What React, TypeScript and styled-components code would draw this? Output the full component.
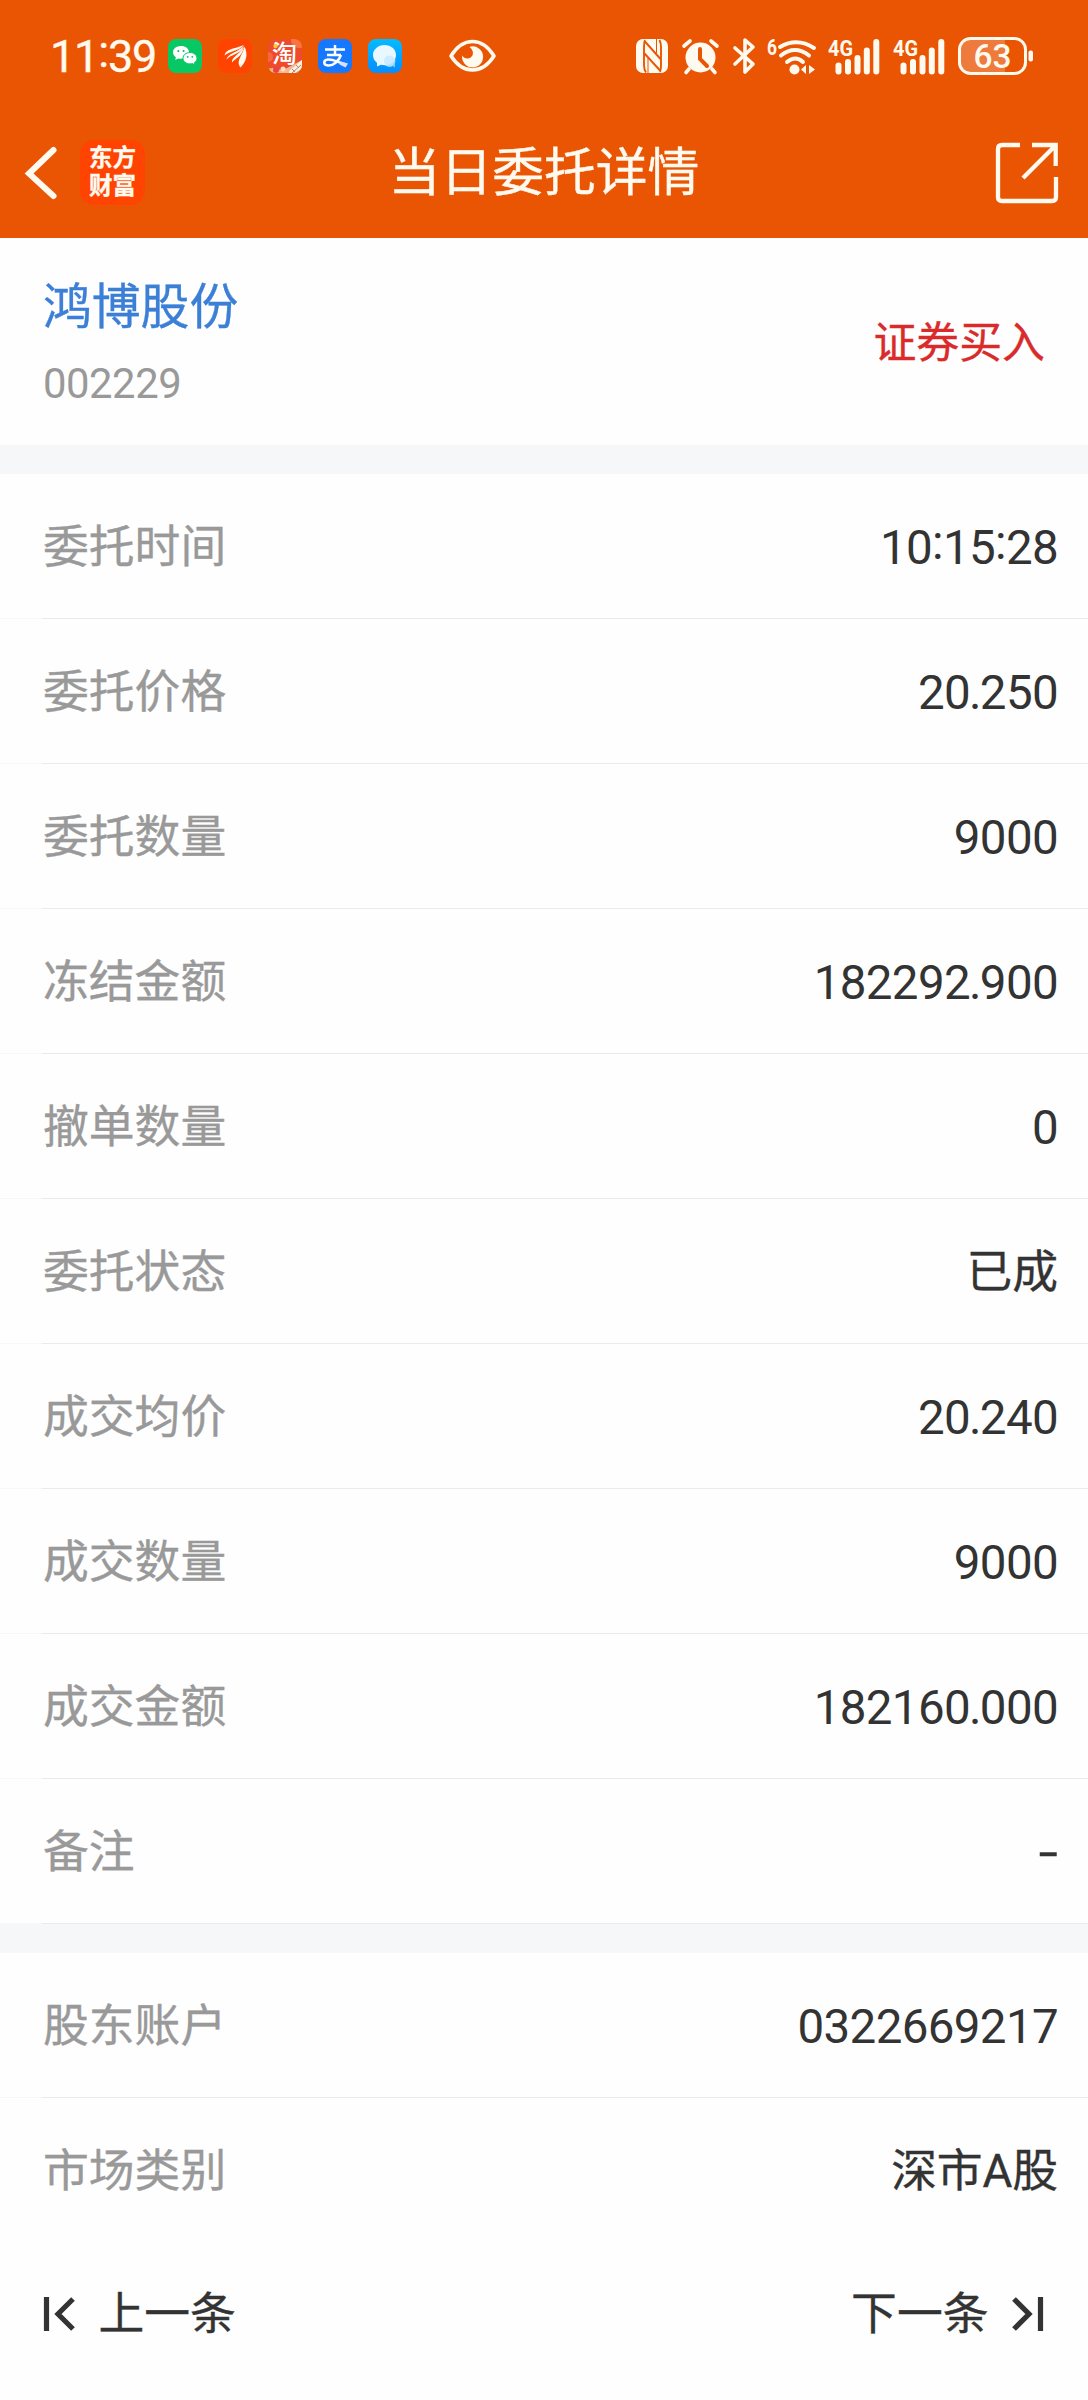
import React from 'react';
import styled, { createGlobalStyle } from 'styled-components';

const Global = createGlobalStyle`
  * { box-sizing: border-box; }
  body { margin: 0; background: #fefefe; font-family: Roboto, "Noto Sans CJK SC", sans-serif; }
  svg { display: block; flex: none; overflow: visible; }
`;

const Screen = styled.main`
  width: 1088px;
  height: 2400px;
  display: flex;
  flex-direction: column;
  background: #fefefe;
  color: #333;
  overflow: hidden;
  -webkit-text-stroke: 0.35px currentColor;
`;

const Header = styled.header`
  height: 238px;
  background: #ea5504;
  color: #fffaf0;
`;

const StatusBar = styled.div`
  height: 112px;
  padding: 0 54px 0 50px;
  display: flex;
  align-items: center;
`;

const Clock = styled.time`
  width: 108px;
  margin-right: 10px;
  padding-top: 2px;
  font-size: 45px;
  line-height: 60px;
  letter-spacing: -1.2px;
  white-space: nowrap;
`;

const AppIcons = styled.div`
  display: flex;
  gap: 16px;
`;

const Eye = styled.div`
  margin-left: 47px;
`;

const Signals = styled.div`
  margin-left: auto;
  display: flex;
  align-items: center;
`;

const Slot = styled.div<{ $w: number }>`
  width: ${p => p.$w}px;
`;

const NavBar = styled.div`
  height: 126px;
  padding: 0 30px 0 24px;
  display: grid;
  grid-template-columns: 203px 1fr 197px;
  align-items: center;
`;

const NavLeft = styled.div`
  display: flex;
  align-items: center;
  gap: 22px;
  padding-bottom: 5px;
`;

const NavRight = styled.div`
  display: flex;
  justify-content: flex-end;
  padding-bottom: 5px;
`;

const Brand = styled.div`
  width: 65px;
  height: 65px;
  padding-bottom: 2px;
  border-radius: 14px;
  background: #ff4401;
  display: grid;
  place-content: center;
  font-size: 23.500px;
  font-weight: 700;
  line-height: 28px;
  text-align: center;
`;

const Title = styled.h1`
  margin: 0;
  padding-bottom: 2px;
  font-size: 51.8px;
  font-weight: 400;
  line-height: 64px;
  text-align: center;
  white-space: nowrap;
  -webkit-text-stroke-width: 0.4px;
`;

const Stock = styled.section`
  height: 207px;
  padding: 0 43px;
  display: flex;
  justify-content: space-between;
`;

const StockId = styled.div`
  padding-top: 37px;
`;

const StockName = styled.div`
  font-size: 48.8px;
  line-height: 66px;
  color: #3b7fd6;
`;

const StockCode = styled.div`
  margin-top: 15px;
  font-size: 41.8px;
  line-height: 56px;
  letter-spacing: -0.45px;
  color: #999;
  -webkit-text-stroke: 0;
`;

const Side = styled.div`
  padding-top: 75px;
  font-size: 42.9px;
  line-height: 60px;
  color: #d92b2b;
`;

const Gap = styled.div`
  height: 29px;
  background: #f6f7f9;
`;

const Row = styled.div<{ $line?: boolean }>`
  height: 145px;
  padding: 4px 30px 0 43px;
  display: flex;
  align-items: center;
  justify-content: space-between;
  font-size: 45.8px;
  line-height: 64px;
  border-bottom: 1px solid transparent;
  border-image: ${p => p.$line ? 'linear-gradient(to right, #f7f7f7 43px, #ebebeb 43px) 1' : 'none'};
`;

const Label = styled.span`
  color: #999;
`;

const Value = styled.span<{ $num?: boolean }>`
  font-size: ${p => (p.$num ? 47.5 : 45.8)}px;
  letter-spacing: ${p => (p.$num ? -0.65 : -0.1)}px;
  -webkit-text-stroke-width: ${p => (p.$num ? 0 : 0.35)}px;
`;

const Dash = styled.span`
  display: inline-block;
  transform: scaleX(1.5);
  transform-origin: right center;
`;

const Colon = styled.span`
  vertical-align: 5px;
  line-height: 1;
`;

const Point = styled.span`
  margin: 0 -1px;
`;

const Pager = styled.nav`
  flex: 1;
  padding: 0 44px 0 43px;
  display: flex;
  justify-content: space-between;
  align-items: flex-start;
`;

const PageButton = styled.button`
  margin: 0;
  padding: 37px 0 0;
  border: 0;
  background: none;
  color: #333;
  display: flex;
  align-items: center;
  gap: 22.500px;
  font: 45.8px/64px Roboto, "Noto Sans CJK SC", sans-serif;
`;

const PageLabel = styled.span`
  padding-top: 3px;
`;

const SmallText = styled.text`
  font-family: Roboto, sans-serif;
  font-weight: 700;
  fill: #fffaf0;
  stroke: none;
  -webkit-text-stroke: 0;
`;

const BatteryText = styled(SmallText)`
  font-weight: 500;
`;

const IconText = styled.text`
  font-family: "Noto Sans CJK SC", sans-serif;
  font-weight: 500;
  fill: #fff;
`;

const WeChat = () => (
  <svg width="34" height="34" viewBox="0 0 34 34">
    <rect width="34" height="34" rx="8" fill="#07c864" />
    <path d="M13 7c-4.600 0-8 2.800-8 6.300 0 2.100 1.100 3.800 2.900 5L7.200 21l3-1.600c.9.200 1.800.3 2.800.3 4.600 0 8-2.800 8-6.400S17.600 7 13 7z" fill="#fff" />
    <path d="M22 13.500c-4 0-7 2.500-7 5.700s3 5.700 7 5.700c.9 0 1.700-.1 2.500-.4l2.500 1.500-.6-2.500c1.600-1 2.600-2.600 2.600-4.300 0-3.200-3-5.700-7-5.700z" fill="#fff" stroke="#07c864" strokeWidth="1" />
    <g fill="#07b85c"><circle cx="10.300" cy="12" r="1" /><circle cx="15.600" cy="12" r="1" /><circle cx="19.700" cy="17.800" r=".9" /><circle cx="24.300" cy="17.800" r=".9" /></g>
  </svg>
);

const EastMoney = () => (
  <svg width="34" height="34" viewBox="0 0 34 34">
    <rect width="34" height="34" rx="8" fill="#ff4401" />
    <g fill="#fffaf0">
      <path d="M6.500 16.500C8 10 14 10.500 26 6 21 12.500 12 11.500 6.500 16.500z" />
      <path d="M8.500 20.500C10 14.500 17 14.500 26 7 22 16 13 15 8.500 20.500z" />
      <path d="M14 23.500C13.500 18 20 16.500 26 8 24 18 18 18.500 14 23.500z" />
      <path d="M22.500 28.500C17.500 22 24.500 17 26.500 7.500 30.500 16 28 23 22.500 28.500z" />
    </g>
  </svg>
);

const Taobao = () => (
  <svg width="34" height="34" viewBox="0 0 34 34">
    <clipPath id="tb"><rect width="34" height="34" rx="8" /></clipPath>
    <g clipPath="url(#tb)">
      <rect width="34" height="34" fill="#ee4b2c" />
      <circle cx="31" cy="1" r="8" fill="#f87443" />
      <circle cx="0" cy="18" r="5" fill="#f5683f" />
      <path d="M0 30q5-2 9 0t10-1l15-8v14H0z" fill="#f1b79b" />
      <path d="M21 32L34 21v13H21z" fill="#fff0df" />
      <path d="M24 34l9-8M28 34l6-4M24 30l3 3M28 26l3 3" stroke="#a78874" strokeWidth="1" />
      <circle cx="8" cy="31" r="3" fill="#ec3f4e" /><circle cx="15" cy="30" r="2.500" fill="#ffe0bd" />
      <circle cx="3" cy="32" r="2" fill="#ffbf3d" />
      <IconText x="4" y="23.500" fontSize="25">淘</IconText>
      <circle cx="7.500" cy="7" r="2.200" fill="#ffc934" />
    </g>
  </svg>
);

const Alipay = () => (
  <svg width="34" height="34" viewBox="0 0 34 34">
    <rect width="34" height="34" rx="8" fill="#1677ff" />
    <path d="M7 10.500h20M17 6v10M9 16h14" stroke="#fff" strokeWidth="2.500" fill="none" />
    <path d="M23 16c-2 6-8 11-13 10.500-5-.5-5-5.500 0-6 6-.3 11 3.500 18.500 5" stroke="#fff" strokeWidth="2.500" fill="none" />
    <path d="M23 22.500l7 2-2.500 4-6-3z" fill="#cfe3ff" />
  </svg>
);

const Messages = () => (
  <svg width="34" height="34" viewBox="0 0 34 34">
    <defs><linearGradient id="ms" x1="0" y1="0" x2="0" y2="1"><stop stopColor="#04bcff" /><stop offset="1" stopColor="#058dff" /></linearGradient></defs>
    <rect width="34" height="34" rx="8" fill="url(#ms)" />
    <circle cx="21.500" cy="22" r="6" fill="#74c9ff" /><path d="M23 26l4 2.500V22z" fill="#74c9ff" />
    <path d="M16.500 6C10 6 5 10.500 5 16c0 3.300 1.600 6 4 7.800V27.500l4-1.700c1 .3 2.300.4 3.500.4C23 26.200 28 21.700 28 16S23 6 16.500 6z" fill="#e9f7ff" />
    <circle cx="21.500" cy="22" r="5.500" fill="#c3e7ff" opacity=".75" />
  </svg>
);

const EyeIcon = () => (
  <svg width="47" height="34" viewBox="0 0 47 34">
    <path d="M2 17Q11 2.500 23.500 2.500T45 17Q36 31 23.500 31T2 17z" fill="none" stroke="#fffaf0" strokeWidth="3.600" strokeLinejoin="round" />
    <path d="M22 7.500A10.500 10.500 0 1 1 13.200 16.500 6 6 0 0 0 18.500 19.500C24 19.500 26.500 12.500 20.500 8z" fill="#fffaf0" />
  </svg>
);

const Nfc = () => (
  <svg width="32" height="34" viewBox="0 0 32 34">
    <rect width="32" height="34" rx="7" fill="#fffaf0" />
    <path d="M9 1Q8 3 8 8v18q0 5 2 7.500M23.500 1q1.500 3 1.500 7v18q0 5-1 7M8.500 2L24.500 20M8.500 14.500L24.500 32" stroke="#ea5504" strokeWidth="1.900" fill="none" />
    <path d="M12 34V19M20.500 0v14" stroke="#ea5504" strokeWidth="1" fill="none" />
  </svg>
);

const Alarm = () => (
  <svg width="37" height="35" viewBox="0 0 37 35">
    <circle cx="18.500" cy="18.500" r="15" fill="#fffaf0" />
    <path d="M2 7l6-5M35 7l-6-5M7 30l-3 3.500M30 30l3 3.500" stroke="#fffaf0" strokeWidth="3.600" strokeLinecap="round" />
    <path d="M18 10v10l7 7" stroke="#ea5504" strokeWidth="4" fill="none" strokeLinecap="round" />
  </svg>
);

const Bluetooth = () => (
  <svg width="22" height="36" viewBox="0 0 22 36">
    <path d="M2 10l18 16-8 8V2l8 7L2 26" fill="none" stroke="#fffaf0" strokeWidth="3.600" strokeLinejoin="round" strokeLinecap="round" />
  </svg>
);

const Wifi = () => (
  <svg width="50" height="38" viewBox="0 0 50 38">
    <SmallText x="0" y="18" fontSize="22" textLength="10" lengthAdjust="spacingAndGlyphs">6</SmallText>
    <path d="M13 10Q30 0 47 11M14 18.500q14-11 28 0M20 25q8.500-7 16 0" fill="none" stroke="#fffaf0" strokeWidth="4" strokeLinecap="round" />
    <circle cx="27.500" cy="32.500" r="5" fill="#fffaf0" />
    <path d="M34 32.500l5-4.500v9zM48 32.500l-6-4.500v9z" fill="#fffaf0" />
  </svg>
);

const Signal = () => (
  <svg width="52" height="38" viewBox="0 0 52 38">
    <SmallText x="0" y="18.500" fontSize="22.500" textLength="25" lengthAdjust="spacingAndGlyphs">4G</SmallText>
    <path d="M10.500 28.500v6M20 25v9.500M29.500 21v13.500M38.800 13.500v21M48.300 5v29.500" stroke="#fffaf0" strokeWidth="6" strokeLinecap="round" />
  </svg>
);

const Battery = () => (
  <svg width="76" height="40" viewBox="0 0 76 40">
    <path d="M47 3H14Q3 3 3 15v10q0 12 11 12h33z" fill="#fff" opacity=".22" />
    <rect x="1.500" y="2.500" width="66" height="35" rx="11" fill="none" stroke="#fffaf0" strokeWidth="3" />
    <rect x="70.500" y="14.500" width="4.500" height="11" rx="2" fill="#fffaf0" />
    <BatteryText x="34.500" y="32" fontSize="33.500" textAnchor="middle">63</BatteryText>
  </svg>
);

const Back = () => (
  <svg width="34" height="54" viewBox="0 0 34 54">
    <path d="M29.500 4L5 27.500 29.500 50" fill="none" stroke="#fffaf0" strokeWidth="6" strokeLinecap="round" />
  </svg>
);

const Share = () => (
  <svg width="64" height="62" viewBox="0 0 64 62">
    <path d="M26 3H8Q4 3 4 7v48q0 4 4 4h50q4 0 4-4V35" fill="none" stroke="#fffaf0" strokeWidth="4.300" />
    <path d="M38 3h23.700v21M61 4L29 36" fill="none" stroke="#fffaf0" strokeWidth="4.300" />
  </svg>
);

const EdgeArrow = ({ flip }: { flip?: boolean }) => (
  <svg width="33" height="34" viewBox="0 0 33 34">
    <path d="M3.500 0v34M30 2L15 17l15 15" fill="none" stroke="#333" strokeWidth="5.200" transform={flip ? 'translate(33 0) scale(-1 1)' : undefined} />
  </svg>
);

const orderRows: [string, string][] = [
  ['委托时间', '10:15:28'],
  ['委托价格', '20.250'],
  ['委托数量', '9000'],
  ['冻结金额', '182292.900'],
  ['撤单数量', '0'],
  ['委托状态', '已成'],
  ['成交均价', '20.240'],
  ['成交数量', '9000'],
  ['成交金额', '182160.000'],
  ['备注', '-'],
];

const accountRows: [string, string][] = [
  ['股东账户', '0322669217'],
  ['市场类别', '深市A股'],
];

const renderValue = (v: string) =>
  v === '-'
    ? <Dash>-</Dash>
    : v.split(/([:.])/).map((part, i) => {
        if (part === ':') return <Colon key={i}>:</Colon>;
        if (part === '.') return <Point key={i}>.</Point>;
        return part;
      });

const Rows = ({ items, closed }: { items: [string, string][]; closed?: boolean }) => (
  <section>
    {items.map(([label, value], i) => (
      <Row key={label} $line={closed || i < items.length - 1}>
        <Label>{label}</Label>
        <Value $num={/^[\d.:]+$/.test(value)}>{renderValue(value)}</Value>
      </Row>
    ))}
  </section>
);

export default function App() {
  return (
    <>
      <Global />
      <Screen>
        <Header>
          <StatusBar>
            <Clock>{renderValue('11:39')}</Clock>
            <AppIcons><WeChat /><EastMoney /><Taobao /><Alipay /><Messages /></AppIcons>
            <Eye><EyeIcon /></Eye>
            <Signals>
              <Slot $w={46}><Nfc /></Slot>
              <Slot $w={51}><Alarm /></Slot>
              <Slot $w={34}><Bluetooth /></Slot>
              <Slot $w={61}><Wifi /></Slot>
              <Slot $w={65}><Signal /></Slot>
              <Slot $w={65}><Signal /></Slot>
              <Battery />
            </Signals>
          </StatusBar>
          <NavBar>
            <NavLeft><Back /><Brand>东方<br />财富</Brand></NavLeft>
            <Title>当日委托详情</Title>
            <NavRight><Share /></NavRight>
          </NavBar>
        </Header>
        <Stock>
          <StockId>
            <StockName>鸿博股份</StockName>
            <StockCode>002229</StockCode>
          </StockId>
          <Side>证券买入</Side>
        </Stock>
        <Gap />
        <Rows items={orderRows} closed />
        <Gap />
        <Rows items={accountRows} />
        <Pager>
          <PageButton><EdgeArrow /><PageLabel>上一条</PageLabel></PageButton>
          <PageButton><PageLabel>下一条</PageLabel><EdgeArrow flip /></PageButton>
        </Pager>
      </Screen>
    </>
  );
}
